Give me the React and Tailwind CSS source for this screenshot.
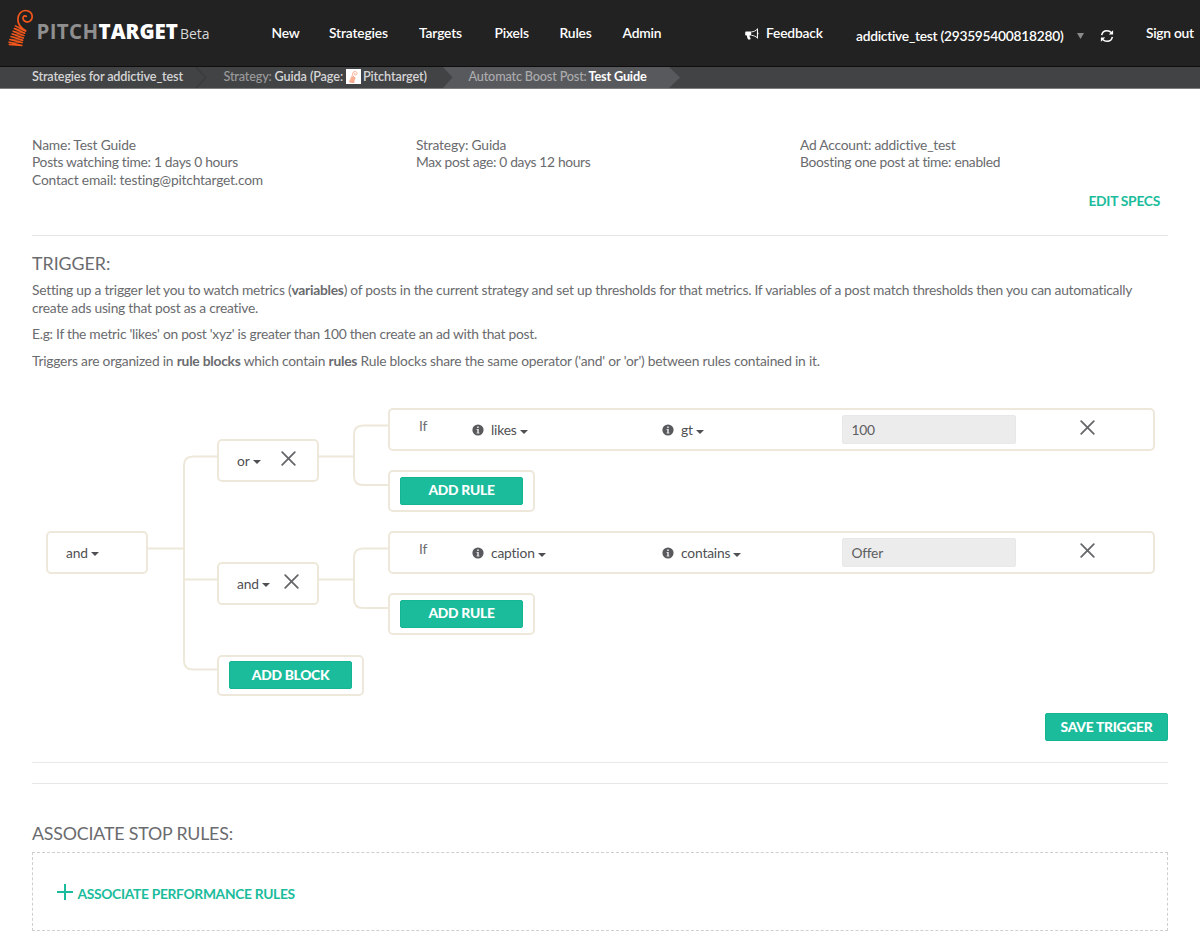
const NAV = [
  ["New", "w-[57.5px]"],
  ["Strategies", "w-[90px]"],
  ["Targets", "w-[75.5px]"],
  ["Pixels", "w-[65px]"],
  ["Rules", "w-[63px]"],
  ["Admin", "w-[122px]"],
];

function Spring({ className }) {
  return (
    <svg viewBox="0 0 26 38" className={className} fill="none" stroke="#f4571b" strokeLinecap="round" strokeLinejoin="round">
      <path
        d="M17.6 21.8C14.600 20 9.800 16.500 9.900 10.500C10 5 13.200 1.500 17.400 1.500C21.600 1.500 24.500 4.500 24.200 8C24 11.400 21 13.400 18.200 12.800C15.400 12.200 14.200 9.500 15.400 7.700C16.200 6.600 17.600 6.600 18.300 7.400"
        strokeWidth="1.700"
      />
      <path
        d="M7.400 16.800L17.600 22M6.300 19.500L16.800 24.300M5.200 22.200L16 26.600M4.100 24.900L15.300 29M3 27.600L14.700 31.300M1.900 30.400L14.200 33.600M1 33.200L13.900 36.400M1.200 35.600L13.900 36.400"
        strokeWidth="1.500"
      />
      <path d="M17.600 22L6.300 19.500M16.800 24.300L5.200 22.200M16 26.600L4.100 24.900M15.300 29L3 27.600M14.700 31.300L1.900 30.400M14.200 33.600L1 33.200" strokeWidth="0.600" />
    </svg>
  );
}

function Megaphone() {
  return (
    <svg viewBox="0 0 14 12" className="h-[12px] w-[14px]">
      <path fill="#fff" d="M1.300 3.600h4.900v4H4.600c-.2 1 .3 1.700.8 2.500.5.7.2 1.200-.5 1.400-.9.2-1.800.1-2.100-.5-.5-1-.9-2.300-.8-3.400h-.7C.6 7.600.2 7.100.2 6.500V4.700c0-.6.5-1.100 1.100-1.100z" />
      <path fill="none" stroke="#fff" strokeWidth="0.900" d="M6.400 3.900C8.900 3.800 10.800 2.700 12.400 1v9C10.800 8.400 8.900 7.500 6.400 7.300" />
      <path fill="#fff" d="M12.200.5h.8v3.900c.8.300.8 1.700 0 2v4h-.8z" />
    </svg>
  );
}

function Refresh() {
  return (
    <svg viewBox="0 0 14 14" className="h-[14px] w-[14px]">
      <path d="M1.700 6.200C2.100 3.400 4.300 1.700 7 1.700C8.700 1.700 10.200 2.400 11.300 3.600M12.300 7.800C11.900 10.600 9.700 12.300 7 12.300C5.300 12.300 3.800 11.600 2.700 10.400" fill="none" stroke="#fff" strokeWidth="1.500" />
      <path d="M13.100 1.200V5.500H8.800ZM.9 12.800V8.500H5.200Z" fill="#fff" />
    </svg>
  );
}

function Cross({ className = "" }) {
  return (
    <svg viewBox="0 0 15 15" className={"h-[15px] w-[15px] shrink-0 " + className}>
      <path d="M1.200 1.200L13.800 13.800M13.800 1.200L1.200 13.800" stroke="#66676a" strokeWidth="1.800" strokeLinecap="round" />
    </svg>
  );
}

function Caret() {
  return (
    <svg viewBox="0 0 8 4" className="ml-[3px] mt-[3px] h-[4px] w-[8px] shrink-0">
      <path d="M0 0H8L4 4Z" fill="#4f5053" />
    </svg>
  );
}

function Info() {
  return (
    <svg viewBox="0 0 12 12" className="mr-[7px] h-[12px] w-[12px] shrink-0">
      <circle cx="6" cy="6" r="5.600" fill="#58595c" />
      <path d="M5.100 2.500h1.700v1.400H5.100zM4.600 5h2.200v3.500h.6v.9H4.600v-.9h.6V5.900h-.6z" fill="#dedede" />
    </svg>
  );
}

function Select({ label, className = "" }) {
  return (
    <div className={"flex items-center text-[13.800px] leading-[18px] tracking-[-0.170px] text-[#4f5053] " + className}>
      <span>{label}</span>
      <Caret />
    </div>
  );
}

function Node({ className, children }) {
  return (
    <div className={"absolute flex rounded-[5px] border-2 border-[#eee8da] bg-white " + className}>{children}</div>
  );
}

function Button({ children, className = "pb-px" }) {
  return (
    <button
      className={
        "flex h-[28px] w-[123px] items-center justify-center rounded-[2px] border border-[#15b594] bg-[#1abc9c] text-[13.800px] font-black leading-none tracking-[-0.270px] text-white " +
        className
      }
    >
      {children}
    </button>
  );
}

function Rule({ className, field, op, value }) {
  return (
    <Node className={"left-[388px] h-[43px] w-[767px] " + className}>
      <span className="ml-[29px] mt-[7px] w-[53px] text-[13.800px] leading-[18px] text-[#6d6e71]">If</span>
      <div className="mt-[11px] flex h-[18px] w-[190px] items-center">
        <Info />
        <Select label={field} />
      </div>
      <div className="mt-[11px] flex h-[18px] w-[180px] items-center">
        <Info />
        <Select label={op} />
      </div>
      <div className="mt-[5px] flex h-[29px] w-[174px] items-center rounded-[2px] border border-[#e8e8e8] bg-[#ececec] pb-px pl-[8.500px] text-[13.800px] text-[#5d5e61]">
        {value}
      </div>
      <Cross className="ml-[64px] mt-[10px]" />
    </Node>
  );
}

export default function App() {
  return (
    <div className="h-[944px] w-[1200px] overflow-hidden whitespace-nowrap bg-white font-[Lato,sans-serif] text-[13.800px] leading-[17.600px] tracking-[-0.270px] text-[#6a6b6e] [font-variant-ligatures:none]">
      <header className="flex h-[67px] border-b border-[#0e0e0e] bg-[#222222] font-semibold text-white">
        <Spring className="ml-[8px] mt-[9px] h-[38px] w-[26px]" />
        <div className="ml-[2.500px] mt-[17px] flex w-[235px] items-baseline font-['Open_Sans',sans-serif] leading-[28px]">
          <span className="text-[20.500px] font-bold tracking-[0.350px] text-[#8f8f8f]">PITCH</span>
          <span className="text-[20.500px] font-extrabold tracking-[0px]">TARGET</span>
          <span className="ml-[2px] text-[14px] font-normal tracking-[0px] text-[#d8d8d8]">Beta</span>
        </div>
        <nav className="mt-[24px] flex tracking-[-0.150px]">
          {NAV.map(([label, w]) => (
            <a key={label} className={w}>
              {label}
            </a>
          ))}
        </nav>
        <a className="mt-[24px] flex w-[111.500px] tracking-[-0.170px]">
          <span className="mr-[7.500px] mt-[4px]">
            <Megaphone />
          </span>
          Feedback
        </a>
        <div className="mt-[27px] flex h-[18px] items-center">
          <span className="w-[221px]">addictive_test (293595400818280)</span>
          <svg viewBox="0 0 7 6" className="h-[6px] w-[7px]">
            <path d="M0 0H7L3.500 6Z" fill="#8a8a8a" />
          </svg>
          <span className="ml-[16px]">
            <Refresh />
          </span>
        </div>
        <a className="ml-[32px] mt-[24px]">Sign out</a>
      </header>

      <div className="flex h-[22px] border-b border-[#7d7d7e] bg-[#424345] text-[12.700px] font-semibold leading-[18px] tracking-[-0.180px] text-[#d5d5d6]">
        <span className="w-[163px] pl-[32px]">Strategies for addictive_test</span>
        <svg viewBox="0 0 14 21" className="ml-[32px] h-[21px] w-[14px]">
          <path d="M1 0L11 10.500L1 21" fill="none" stroke="#3b3b3d" strokeWidth="1.200" />
        </svg>
        <div className="ml-[14.500px] flex w-[219px]">
          <span className="mr-[3px] font-medium text-[#9b9b9c]">Strategy:</span>
          <span className="tracking-[-0.130px]">Guida (Page:</span>
          <span className="ml-[3px] mr-[2px] mt-[2px] flex h-[15px] w-[15px] items-center justify-center bg-white">
            <Spring className="h-[12px] w-[9px] opacity-80" />
          </span>
          <span className="tracking-[-0.130px]">Pitchtarget)</span>
        </div>
        <div className="flex h-[21px]">
          <svg viewBox="0 0 10 21" className="h-[21px] w-[10px]">
            <path d="M0 0H10V21H0L9.500 10.500Z" fill="#58595d" />
          </svg>
          <div className="flex w-[216px] bg-[#58595d] pl-[16px]">
            <span className="mr-[2px] font-medium text-[#acacae]">Automatc Boost Post:</span>
            <span className="font-bold text-white">Test Guide</span>
          </div>
          <svg viewBox="0 0 11 21" className="h-[21px] w-[11px]">
            <path d="M0 0L11 10.500L0 21Z" fill="#58595d" />
          </svg>
        </div>
      </div>

      <main className="px-[32px]">
        <section className="flex h-[147px] flex-col border-b border-[#e4e4e4] pt-[46.500px]">
          <div className="grid grid-cols-[384px_384px_1fr]">
            <div>
              <p className="tracking-[-0.170px]">Name: Test Guide</p>
              <p className="tracking-[-0.300px]">Posts watching time: 1 days 0 hours</p>
              <p className="tracking-[-0.190px]">Contact email: testing@pitchtarget.com</p>
            </div>
            <div>
              <p className="tracking-[-0.170px]">Strategy: Guida</p>
              <p className="tracking-[-0.340px]">Max post age: 0 days 12 hours</p>
            </div>
            <div>
              <p className="tracking-[-0.220px]">Ad Account: addictive_test</p>
              <p className="tracking-[-0.300px]">Boosting one post at time: enabled</p>
            </div>
          </div>
          <a className="mr-[8px] mt-[3.500px] self-end font-bold text-[#1abc9c]">EDIT SPECS</a>
        </section>

        <section className="h-[527px] border-b border-[#e8e8e8] pt-[15px]">
          <h2 className="h-[30px] text-[17.800px] leading-[24px] tracking-[0px]">TRIGGER:</h2>
          <p className="tracking-[-0.250px]">
            Setting up a trigger let you to watch metrics (<b>variables</b>) of posts in the current strategy and set up
            thresholds for that metrics. If variables of a post match thresholds then you can automatically
            <br />
            create ads using that post as a creative.
          </p>
          <p className="mt-[9px]">
            E.g: If the metric 'likes' on post 'xyz' is greater than 100 then create an ad with that post.
          </p>
          <p className="mt-[9px] tracking-[-0.217px]">
            Triggers are organized in <b>rule blocks</b> which contain <b>rules</b> Rule blocks share the same operator
            ('and' or 'or') between rules contained in it.
          </p>

          <div className="relative -ml-[32px] mt-[31px] h-[313px] w-[1200px]">
            <svg viewBox="0 0 1200 312" className="absolute inset-x-0 top-0 h-[312px] w-[1200px]" fill="none" stroke="#eee8da" strokeWidth="2">
              <path d="M147 148.500H184M218 56.500H193Q184 56.500 184 65.500V260.500Q184 269.500 193 269.500H218M184 179.500H218" />
              <path d="M318 56.500H354M389 25.500H363Q354 25.500 354 34.500V76Q354 85 363 85H389" />
              <path d="M318 179.500H354M389 148.500H363Q354 148.500 354 157.500V199Q354 208 363 208H389" />
            </svg>
            <Node className="left-[46px] top-[131px] h-[43px] w-[102px]">
              <Select label="and" className="ml-[18px]" />
            </Node>
            <Node className="left-[217px] top-[39px] h-[43px] w-[102px]">
              <Select label="or" className="ml-[18px]" />
              <Cross className="ml-[20px] mt-[10px]" />
            </Node>
            <Node className="left-[217px] top-[162px] h-[43px] w-[102px]">
              <Select label="and" className="ml-[18px]" />
              <Cross className="ml-[14px] mt-[10px]" />
            </Node>
            <Node className="left-[217px] top-[255px] h-[41px] w-[147px]">
              <Button className="ml-[10px] mt-[4px] pb-px">ADD BLOCK</Button>
            </Node>
            <Rule className="top-[8px]" field="likes" op="gt" value="100" />
            <Node className="left-[388px] top-[70px] h-[42px] w-[147px]">
              <Button className="ml-[10px] mt-[5px] pb-[3px]">ADD RULE</Button>
            </Node>
            <Rule className="top-[131px]" field="caption" op="contains" value="Offer" />
            <Node className="left-[388px] top-[193px] h-[42px] w-[147px]">
              <Button className="ml-[10px] mt-[5px] pb-[3px]">ADD RULE</Button>
            </Node>
          </div>
          <div className="flex justify-end">
            <Button>SAVE TRIGGER</Button>
          </div>
        </section>

        <div className="h-[21px] border-b border-[#e8e8e8]" />

        <section className="pt-[37px]">
          <h2 className="h-[31px] text-[17.800px] leading-[24px] tracking-[-0.180px]">ASSOCIATE STOP RULES:</h2>
          <div className="flex h-[79px] items-center border border-dashed border-[#cfcfcf] pl-[24px] text-[#1abc9c]">
            <svg viewBox="0 0 16 16" className="h-[16px] w-[16px]">
              <path d="M8 0V16M0 8H16" stroke="#1abc9c" strokeWidth="2" />
            </svg>
            <span className="ml-[4.500px] mt-[5px] font-bold tracking-[-0.310px]">ASSOCIATE PERFORMANCE RULES</span>
          </div>
        </section>
      </main>
    </div>
  );
}
